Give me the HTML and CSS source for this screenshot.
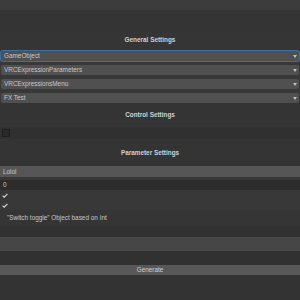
FILE: index.html
```html
<!DOCTYPE html>
<html>
<head>
<meta charset="utf-8">
<link rel="stylesheet" href="styles.css">
</head>
<body>
<div class="panel">
  <div class="topbar"></div>
  <div class="spacer"></div>
  <div class="header h-general">General Settings</div>
  <div class="dropdown focused"><span>GameObject</span><i class="arrow"></i></div>
  <div class="dropdown"><span>VRCExpressionParameters</span><i class="arrow"></i></div>
  <div class="dropdown"><span>VRCExpressionsMenu</span><i class="arrow"></i></div>
  <div class="dropdown last"><span>FX Test</span><i class="arrow"></i></div>
  <div class="header h-control">Control Settings</div>
  <div class="checkrow"><span class="checkbox"></span></div>
  <div class="header h-param">Parameter Settings</div>
  <div class="textfield">Lolol</div>
  <div class="numfield">0</div>
  <div class="tick"><svg width="6" height="5" viewBox="0 0 6 5"><path d="M0.6 2.6 L2.2 4.2 L5.4 0.8" fill="none" stroke="#d4d4d4" stroke-width="1.2"/></svg></div>
  <div class="tick"><svg width="6" height="5" viewBox="0 0 6 5"><path d="M0.6 2.6 L2.2 4.2 L5.4 0.8" fill="none" stroke="#d4d4d4" stroke-width="1.2"/></svg></div>
  <div class="label">"Switch toggle" Object based on Int</div>
  <div class="band dark"></div>
  <div class="band light"></div>
  <div class="band dark2"></div>
  <div class="button">Generate</div>
  <div class="rest"></div>
</div>
</body>
</html>
```

FILE: styles.css
```css
html, body {
  margin: 0;
  padding: 0;
  background: #383838;
}
.panel {
  width: 300px;
  height: 300px;
  display: flex;
  flex-direction: column;
  font-family: "Liberation Sans", Arial, sans-serif;
  font-size: 6.4px;
  color: #c8c8c8;
  overflow: hidden;
}
.topbar { height: 10px; background: #3c3c3c; flex: none; }
.spacer { flex: none; height: 23px; background: #343434; }
.header {
  flex: none;
  text-align: center;
  font-weight: 700;
  color: #d2d2d2;
  background: #353535;
}
.h-general { height: 18px; line-height: 13px; }
.dropdown {
  flex: none;
  height: 10px;
  margin: 0 1px 4px 1px;
  background: #505050;
  border-radius: 2px;
  display: flex;
  align-items: center;
  justify-content: space-between;
  padding: 0 2px 0 3px;
  line-height: 10px;
}
.dropdown.last { margin-bottom: 0; }
.dropdown.focused {
  box-shadow: 0 0 0 1px #3a6ea5;
}
.arrow {
  width: 0; height: 0;
  border-left: 2.5px solid transparent;
  border-right: 2.5px solid transparent;
  border-top: 3px solid #c0c0c0;
}
.h-control { height: 24px; line-height: 24px; background: #343434; }
.checkrow { height: 12px; display: flex; align-items: center; padding-left: 2px; background: #303030; flex: none; }
.checkbox { width: 6px; height: 6px; background: #2a2a2a; border: 1px solid #1e1e1e; }
.h-param { height: 27px; line-height: 27px; background: #343434; }
.textfield {
  flex: none;
  height: 11px;
  line-height: 11px;
  background: #565656;
  padding-left: 3px;
}
.numfield {
  flex: none;
  height: 10px;
  line-height: 10px;
  background: #2c2c2c;
  padding-left: 3px;
  margin-top: 3px;
}
.tick {
  flex: none;
  height: 10px;
  display: flex;
  align-items: center;
  padding-left: 2px;
}
.label {
  flex: none;
  height: 16px;
  line-height: 16px;
  padding-left: 7px;
  background: #353535;
}
.band { flex: none; }
.dark { height: 11px; background: #313131; }
.light { height: 14px; background: #464646; }
.dark2 { height: 14px; background: #313131; }
.button {
  flex: none;
  height: 10px;
  line-height: 10px;
  background: #585858;
  text-align: center;
  color: #d0d0d0;
}
.rest { flex: 1; background: #333333; }
```
